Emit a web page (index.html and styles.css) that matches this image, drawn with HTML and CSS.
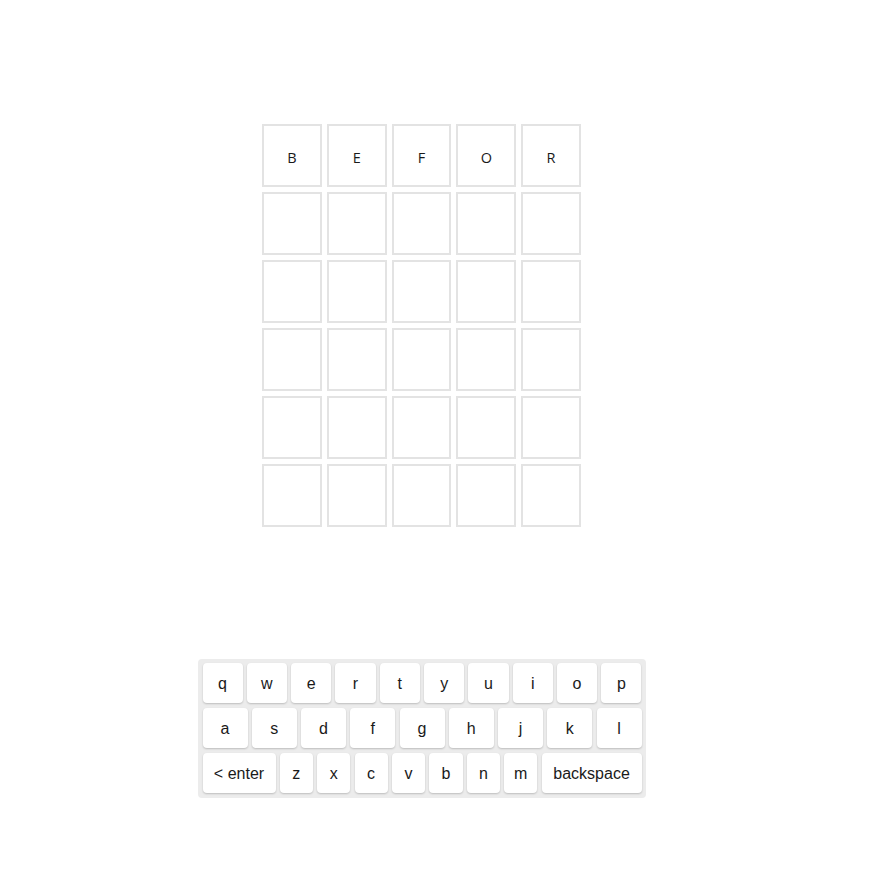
FILE: index.html
```html
<!DOCTYPE html>
<html>
<head>
<meta charset="utf-8">
<link rel="stylesheet" href="styles.css">
</head>
<body>
<div class="app">
  <div class="board">
    <div class="tile">B</div><div class="tile">E</div><div class="tile">F</div><div class="tile">O</div><div class="tile">R</div>
    <div class="tile"></div><div class="tile"></div><div class="tile"></div><div class="tile"></div><div class="tile"></div>
    <div class="tile"></div><div class="tile"></div><div class="tile"></div><div class="tile"></div><div class="tile"></div>
    <div class="tile"></div><div class="tile"></div><div class="tile"></div><div class="tile"></div><div class="tile"></div>
    <div class="tile"></div><div class="tile"></div><div class="tile"></div><div class="tile"></div><div class="tile"></div>
    <div class="tile"></div><div class="tile"></div><div class="tile"></div><div class="tile"></div><div class="tile"></div>
  </div>
  <div class="keyboard">
    <div class="krow">
      <div class="key">q</div><div class="key">w</div><div class="key">e</div><div class="key">r</div><div class="key">t</div><div class="key">y</div><div class="key">u</div><div class="key">i</div><div class="key">o</div><div class="key">p</div>
    </div>
    <div class="krow">
      <div class="key">a</div><div class="key">s</div><div class="key">d</div><div class="key">f</div><div class="key">g</div><div class="key">h</div><div class="key">j</div><div class="key">k</div><div class="key">l</div>
    </div>
    <div class="krow">
      <div class="key enter">&lt; enter</div><div class="key">z</div><div class="key">x</div><div class="key">c</div><div class="key">v</div><div class="key">b</div><div class="key">n</div><div class="key">m</div><div class="key back">backspace</div>
    </div>
  </div>
</div>
</body>
</html>
```

FILE: styles.css
```css
html, body {
  margin: 0;
  padding: 0;
  background: #ffffff;
}

.app {
  width: 843px;
  display: flex;
  flex-direction: column;
  align-items: center;
  padding-top: 124px;
}

.board {
  width: 319px;
  display: grid;
  grid-template-columns: repeat(5, 1fr);
  grid-auto-rows: 63px;
  gap: 5px 5px;
}

.tile {
  box-sizing: border-box;
  border: 2px solid #e3e3e3;
  display: flex;
  align-items: center;
  justify-content: center;
  font-family: "Open Sans", "DejaVu Sans", sans-serif;
  font-size: 14.5px;
  color: #1a1a1a;
  padding-top: 3px;
}

.keyboard {
  margin-top: 132px;
  width: 448px;
  box-sizing: border-box;
  padding: 4px 4px 5px 5px;
  background: #ececec;
  border-radius: 4px;
  display: flex;
  flex-direction: column;
  gap: 5px;
}

.krow {
  display: flex;
  gap: 4.2px;
}

.key {
  flex: 1 1 0;
  height: 40px;
  background: #ffffff;
  border-radius: 4px;
  box-shadow: 0 1px 2px rgba(0, 0, 0, 0.2);
  display: flex;
  align-items: center;
  justify-content: center;
  font-family: "Liberation Sans", Arial, sans-serif;
  font-size: 16px;
  color: #1a1a1a;
  padding-top: 1px;
  box-sizing: border-box;
}

.key.enter {
  flex: 0 0 73px;
}

.key.back {
  flex: 0 0 100px;
}
```
